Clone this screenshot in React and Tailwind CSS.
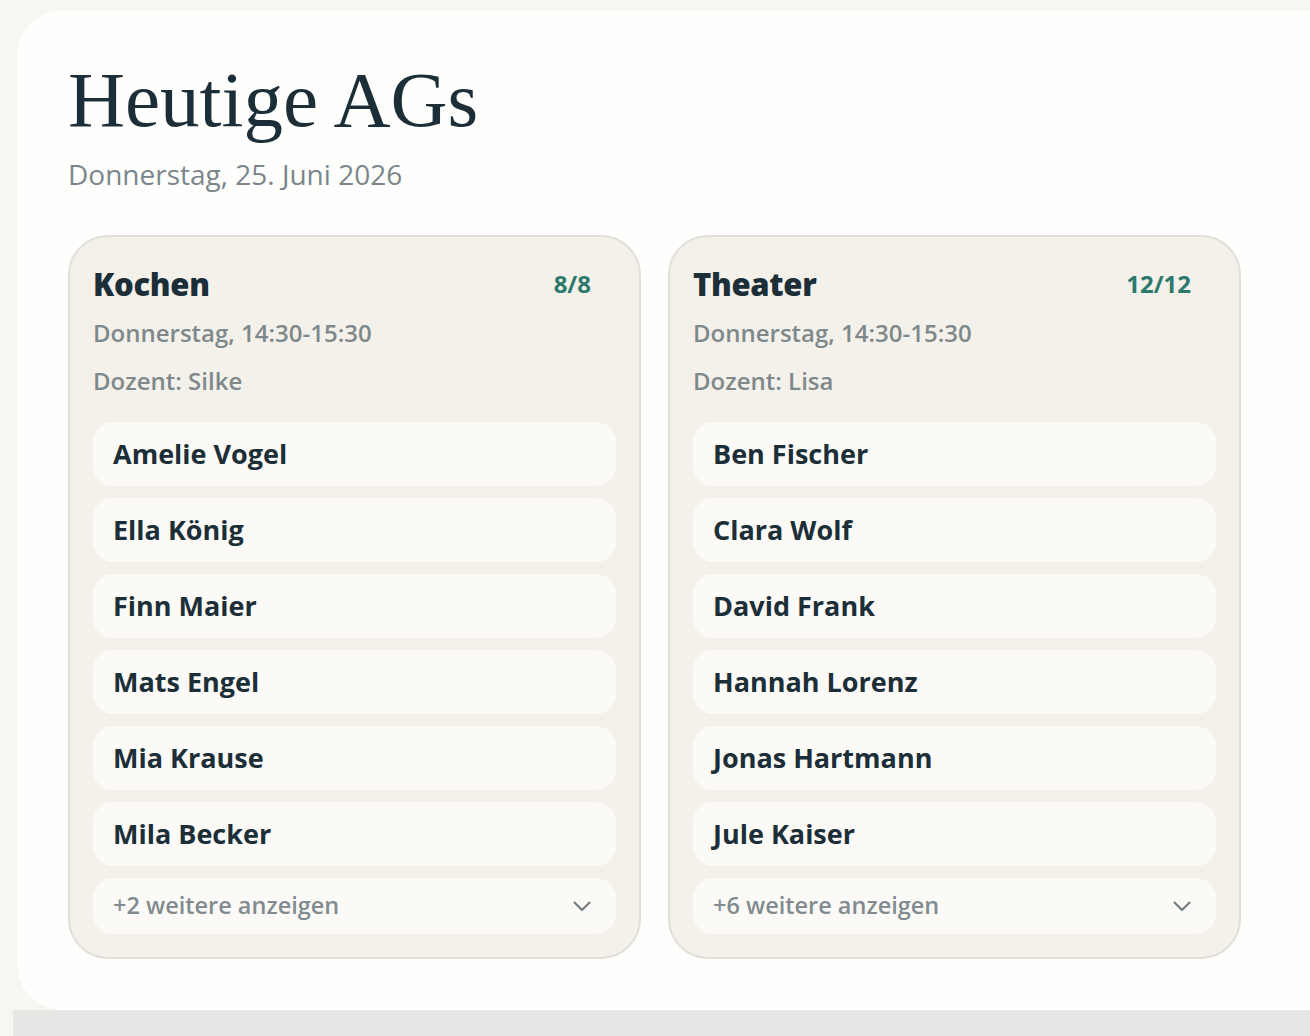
import React from "react";

const ags = [
  {
    name: "Kochen",
    count: "8/8",
    time: "Donnerstag, 14:30-15:30",
    teacher: "Silke",
    kids: ["Amelie Vogel", "Ella König", "Finn Maier", "Mats Engel", "Mia Krause", "Mila Becker"],
    more: 2,
  },
  {
    name: "Theater",
    count: "12/12",
    time: "Donnerstag, 14:30-15:30",
    teacher: "Lisa",
    kids: ["Ben Fischer", "Clara Wolf", "David Frank", "Hannah Lorenz", "Jonas Hartmann", "Jule Kaiser"],
    more: 6,
  },
];

function Chevron() {
  return (
    <svg width="18" height="11" viewBox="0 0 18 11" fill="none">
      <polyline points="1.5,1.5 9,9 16.5,1.5" stroke="#6f7b80" strokeWidth="2" strokeLinecap="round" strokeLinejoin="round" />
    </svg>
  );
}

function AgCard({ ag }) {
  return (
    <div className="rounded-[40px] border-2 border-[#e1dfd7] bg-[#f3f1ea] px-[23px] pt-[28px] pb-[23px]">
      <div className="flex items-center justify-between pr-[25px]">
        <h2 className="text-[31px] leading-[38px] font-extrabold tracking-[-0.3px] text-[#1c2e38]">{ag.name}</h2>
        <span className="text-[24px] font-bold text-[#2d7a6d]">{ag.count}</span>
      </div>
      <p className="mt-[6px] text-[24px] leading-[48px] font-semibold text-[#7f898c]">{ag.time}</p>
      <p className="text-[24px] leading-[48px] font-semibold text-[#7f898c]">Dozent: {ag.teacher}</p>
      <ul className="mt-[17px] flex flex-col gap-[12px]">
        {ag.kids.map((kid) => (
          <li
            key={kid}
            className="flex h-[64px] items-center rounded-[20px] bg-[#fbfaf6] px-[20px] text-[27px] font-bold text-[#1c2e38]"
          >
            {kid}
          </li>
        ))}
        <li className="flex h-[56px] items-center justify-between rounded-[20px] bg-[#fbfaf6] pl-[20px] pr-[25px] text-[23.5px] font-semibold text-[#828c90]">
          <span>+{ag.more} weitere anzeigen</span>
          <Chevron />
        </li>
      </ul>
    </div>
  );
}

export default function App() {
  return (
    <div
      className="flex h-[1036px] flex-col overflow-hidden bg-[#f7f6f2] pt-[10px]"
      style={{ fontFamily: "'Open Sans', Lato, sans-serif" }}
    >
      <div className="ml-[17px] rounded-l-[46px] bg-[#fefefc] pl-[51px] pt-[45px] pb-[51px]">
        <h1
          className="text-[79px] leading-[90px] text-[#1c2e38]"
          style={{ fontFamily: "'Liberation Serif', serif" }}
        >
          Heutige AGs
        </h1>
        <p className="mt-[8px] text-[28px] text-[#7a868b]">Donnerstag, 25. Juni 2026</p>
        <div className="mt-[40px] grid grid-cols-[573px_573px] gap-[27px]">
          {ags.map((ag) => (
            <AgCard key={ag.name} ag={ag} />
          ))}
        </div>
      </div>
      <div className="ml-[13px] flex-1 bg-[#e6e6e4]"></div>
    </div>
  );
}
